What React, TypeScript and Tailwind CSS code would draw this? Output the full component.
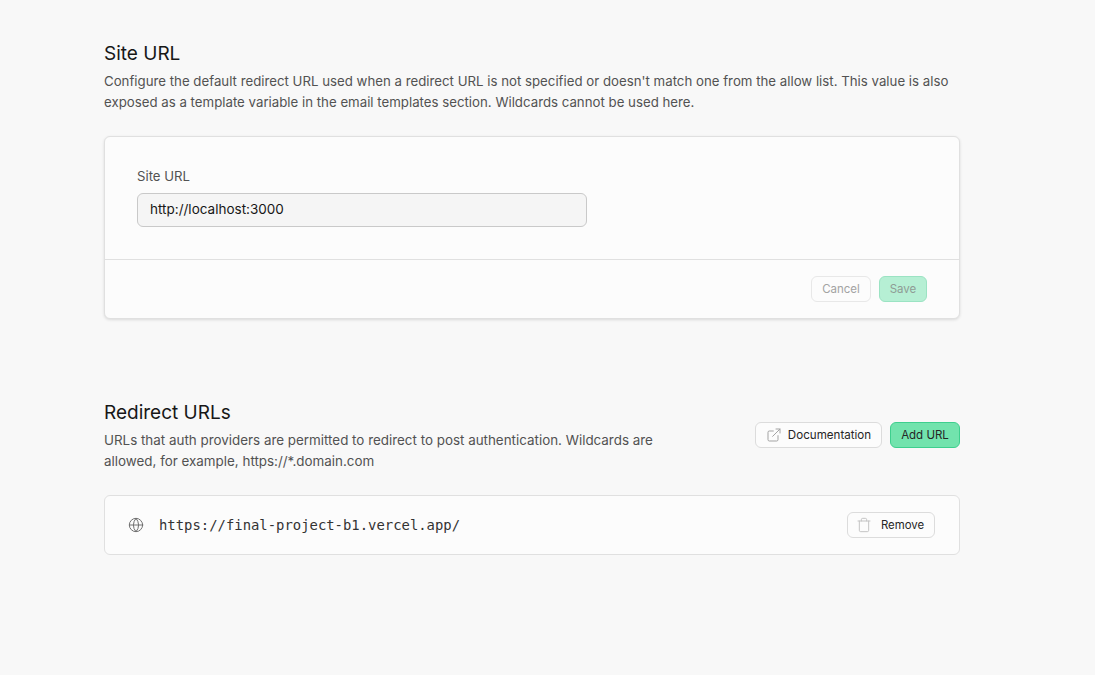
import { ExternalLink, Globe, Trash } from 'lucide-react';

const sans = 'font-["Inter",sans-serif]';

function SiteUrlSection() {
  return (
    <section>
      <h2 className="text-[19px] leading-7 text-[#171717]">Site URL</h2>
      <p className="mt-[3px] w-[856px] text-[13.25px] leading-[21px] text-[#525252]">
        Configure the default redirect URL used when a redirect URL is not specified or doesn't match one from the allow list. This value is also exposed as a template variable in the email templates section. Wildcards cannot be used here.
      </p>

      <div className="mt-[23px] w-[856px] rounded-md border border-[#e0e0e0] bg-[#fcfcfc] shadow-[0_1px_3px_rgba(0,0,0,0.12)]">
        <div className="h-[122px] px-8 pt-[29px]">
          <label className="block text-[13.2px] leading-5 text-[#525252]">Site URL</label>
          <div className="mt-[7px] flex h-[34px] w-[450px] items-center rounded-md border border-[#c9c9c9] bg-[#f5f5f5] px-3 pb-px text-[13.5px] text-[#171717]">
            http://localhost:3000
          </div>
        </div>
        <div className="flex h-[59px] items-center justify-end gap-2 border-t border-[#e0e0e0] px-8">
          <button className="h-[26px] w-[60px] rounded-md border border-[#e8e8e8] pt-px text-[11.5px] text-[#a3a3a3]">Cancel</button>
          <button className="h-[26px] w-[48px] rounded-md border border-[#9be3c3] bg-[#b6efd4] pt-px text-[11.5px] text-[#8f9c95]">Save</button>
        </div>
      </div>
    </section>
  );
}

function RedirectUrlsSection() {
  return (
    <section className="mt-[80px]">
      <div className="flex w-[856px] items-center justify-between">
        <div>
          <h2 className="text-[19px] leading-7 text-[#171717]">Redirect URLs</h2>
          <p className="mt-[3px] w-[580px] text-[13.4px] leading-[21px] text-[#525252]">
            URLs that auth providers are permitted to redirect to post authentication. Wildcards are allowed, for example, https://*.domain.com
          </p>
        </div>
        <div className="mb-[2px] flex gap-2">
          <button className="flex h-[26px] w-[127px] items-center justify-center gap-[6px] rounded-md border border-[#dcdcdc] bg-[#fcfcfc] pt-[2px] text-[11.6px] text-[#262626]">
            <ExternalLink size={16} strokeWidth={1.5} className="-mt-[2px] text-[#a3a3a3]" />
            Documentation
          </button>
          <button className="h-[26px] w-[70px] rounded-md border border-[#3ecf8e] bg-[#72e3ad] pt-[2px] text-[11.5px] text-[#262626]">Add URL</button>
        </div>
      </div>

      <div className="mt-[23px] flex h-[60px] w-[856px] items-center justify-between rounded-md border border-[#e0e0e0] bg-[#fcfcfc] pl-[23px] pr-6">
        <div className="flex items-center gap-[15px]">
          <Globe size={16} strokeWidth={1.5} className="text-[#707070]" />
          <span className='font-["DejaVu_Sans_Mono",monospace] text-[13.9px] text-[#333333]'>https://final-project-b1.vercel.app/</span>
        </div>
        <button className="flex h-[26px] w-[88px] items-center justify-center gap-[9px] rounded-md border border-[#dcdcdc] pr-[2px] pt-[2px] text-[11.4px] text-[#262626]">
          <Trash size={16} strokeWidth={1.5} className="-mt-[2px] text-[#c4c4c4]" />
          Remove
        </button>
      </div>
    </section>
  );
}

export default function App() {
  return (
    <div className={`h-[675px] overflow-hidden bg-[#f8f8f8] pl-[104px] pt-[40px] ${sans}`}>
      <SiteUrlSection />
      <RedirectUrlsSection />
    </div>
  );
}
